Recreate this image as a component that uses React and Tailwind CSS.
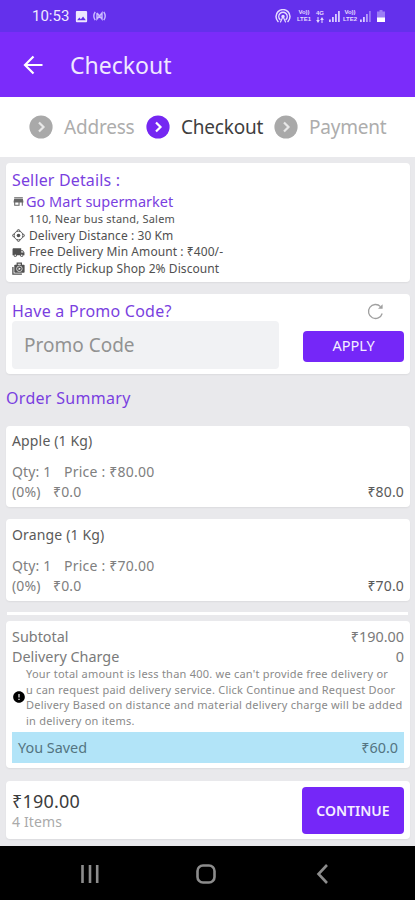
import React from 'react';
import { MdStore, MdLocalShipping, MdError, MdImage } from 'react-icons/md';
import { clsx } from 'clsx';

const steps = [
    { label: 'Address', active: false, width: 'w-[117px]' },
    { label: 'Checkout', active: true, width: 'w-[128px]' },
    { label: 'Payment', active: false, width: 'w-[115px]' },
];

const items = [
    { name: 'Apple (1 Kg)', price: '₹80.00', total: '₹80.0' },
    { name: 'Orange (1 Kg)', price: '₹70.00', total: '₹70.0' },
];

function Signal({ dim }) {
    return (
        <svg width="11" height="12" viewBox="0 0 11 12" fill="#d9ccff" className="shrink-0">
            <rect x="0" y="9.500" width="1.800" height="2.500" />
            <rect x="3" y="7" width="1.800" height="5" />
            <rect x="6" y="4" width="1.800" height="8" opacity={dim ? 0.7 : 1} />
            <rect x="9" y="1" width="1.800" height="11" opacity={dim ? 0.45 : 1} />
        </svg>
    );
}

function Volte({ n }) {
    return (
        <div className="flex w-4 shrink-0 flex-col items-center font-['Liberation_Sans',sans-serif] text-[6px] font-bold leading-[7px] text-[#e4dbff]">
            <span>Vo))</span>
            <span>LTE{n}</span>
        </div>
    );
}

function StatusBar() {
    return (
        <div className="flex h-8 items-center bg-[#6430ec] pl-8 pr-[30px] text-white">
            <span className="w-[38px] font-[Roboto] text-[15px] leading-none text-[#eee8ff]">10:53</span>
            <MdImage size={15} className="ml-1 text-[#eee8ff]" />
            <svg width="13" height="10" viewBox="0 0 13 10" className="ml-1" fill="none" stroke="#cbbcff" strokeWidth="1.400">
                <path d="M2.200 .8c-1.600 2.400-1.600 6 0 8.400M10.800 .8c1.600 2.400 1.600 6 0 8.400M4 2v6l5-6v6L4 2" />
            </svg>
            <div className="ml-auto flex items-center">
                {/* hotspot */}
                <svg width="16" height="14" viewBox="0 0 16 14" fill="none" stroke="#e4dbff" strokeWidth="1.500" strokeLinecap="round">
                    <path d="M3 12.500a7 7 0 1 1 10 0" />
                    <path d="M5 10.500a4.200 4.200 0 1 1 6 0" />
                    <path d="M8 7.500l-2.500 5.500M8 7.500l2.500 5.500" strokeWidth="1.200" />
                    <circle cx="8" cy="7.500" r="1" fill="#e4dbff" />
                </svg>
                <div className="ml-[5px] flex">
                    <Volte n="1" />
                </div>
                <div className="ml-[3px] mr-1 flex w-2.5 flex-col items-center font-['Liberation_Sans',sans-serif] text-[6px] font-bold leading-[7px] text-[#e4dbff]">
                    <span>4G</span>
                    <svg width="8" height="6" viewBox="0 0 8 6" fill="#e4dbff">
                        <path d="M1.500 0h1v3h1.300L2 6 .2 3h1.300zM5.500 6h1V3h1.300L6 0 4.200 3h1.300z" />
                    </svg>
                </div>
                <Signal />
                <div className="ml-0.5 mr-0.5 flex">
                    <Volte n="2" />
                </div>
                <Signal dim />
                <svg width="8" height="12" viewBox="0 0 8 12" className="ml-1.5">
                    <path d="M2.500 0h3v1.500H8V12H0V1.500h2.500z" fill="#9b7df5" />
                    <rect y="7.500" width="8" height="4.500" fill="#fff" />
                </svg>
            </div>
        </div>
    );
}

function Steps() {
    return (
        <div className="flex h-[60px] items-center bg-white pl-[29px]">
            {steps.map((step) => (
                <div key={step.label} className={clsx('flex shrink-0 items-center', step.width)}>
                    <svg width="24" height="24" viewBox="0 0 24 24" className="shrink-0">
                        <circle cx="12" cy="12" r="11.600" fill={step.active ? '#7527f2' : '#a9a9a9'} />
                        <path d="M10 7.500l4.500 4.500-4.500 4.500" fill="none" stroke={step.active ? '#fff' : '#e8e8e8'} strokeWidth="2.200" />
                    </svg>
                    <span className={clsx('ml-[11px] text-[19px] leading-6 tracking-[-0.2px]', step.active ? 'text-[#3f3f3f]' : 'text-[#adadad]')}>
                        {step.label}
                    </span>
                </div>
            ))}
        </div>
    );
}

function SellerRow({ icon, children, className = 'text-[12px] tracking-[0.08px]' }) {
    return (
        <div className="flex h-[16.500px] items-center text-[#505050]">
            <span className="flex w-[17px] shrink-0">{icon}</span>
            <span className={clsx('whitespace-nowrap leading-4', className)}>{children}</span>
        </div>
    );
}

function TargetIcon() {
    return (
        <svg width="13" height="13" viewBox="0 0 13 13" fill="none" stroke="currentColor" strokeWidth="1">
            <path d="M4.600 1.900L6.500 .4l1.900 1.500M11.100 4.600l1.500 1.900-1.500 1.900M8.400 11.100l-1.900 1.500-1.900-1.500M1.900 8.400L.4 6.500l1.500-1.900" />
            <circle cx="6.500" cy="6.500" r="4.400" />
            <circle cx="6.500" cy="6.500" r="1.800" fill="currentColor" stroke="none" />
        </svg>
    );
}

function PickupIcon() {
    return (
        <svg width="13" height="13" viewBox="0 0 13 13">
            <path d="M.9 5v7.200h9" fill="none" stroke="currentColor" strokeWidth="1.300" />
            <path d="M5.200 3V1.200h4.200V3" fill="none" stroke="currentColor" strokeWidth="1.200" />
            <rect x="2.300" y="2.800" width="10.300" height="8" rx="0.800" fill="currentColor" />
            <circle cx="7.400" cy="6.800" r="2.800" fill="none" stroke="#fff" strokeWidth="0.700" />
            <path d="M6.600 5.400v2.800l2.200-1.400z" fill="#fff" />
        </svg>
    );
}

function Card({ className, children }) {
    return <div className={clsx('mx-[6px] mr-[5px] rounded-[4px] bg-white shadow-[0_1px_2px_rgba(0,0,0,0.06)]', className)}>{children}</div>;
}

export default function App() {
    return (
        <div className="flex h-[900px] w-[415px] flex-col overflow-hidden bg-[#e9e9ec] font-['Noto_Sans',sans-serif]">
            <StatusBar />
            <div className="flex h-[65px] items-center bg-[#7b2cfa] pl-[23px] text-white">
                <svg width="20" height="20" viewBox="0 0 20 20" fill="none" stroke="#fff" strokeWidth="2.200">
                    <path d="M19.500 10H2.500M10.500 1.500L2 10l8.500 8.500" />
                </svg>
                <h1 className="ml-[27px] text-[23px] leading-8 text-[#f0e8ff]">Checkout</h1>
            </div>
            <Steps />

            <Card className="mt-1.5 h-[119px] pl-[6px] pt-[7px]">
                <h2 className="text-[16px] leading-[21px] tracking-[0.15px] text-[#7a3fe0]">Seller Details :</h2>
                <div className="flex h-5 items-center">
                    <MdStore size={13} className="text-[#666]" />
                    <span className="ml-px text-[14.500px] leading-5 text-[#7a3fe0]">Go Mart supermarket</span>
                </div>
                <SellerRow className="text-[11px] tracking-[0.2px]">110, Near bus stand, Salem</SellerRow>
                <SellerRow icon={<TargetIcon />}>Delivery Distance : 30 Km</SellerRow>
                <SellerRow icon={<MdLocalShipping size={13} />}>Free Delivery Min Amount : ₹400/-</SellerRow>
                <SellerRow icon={<PickupIcon />}>Directly Pickup Shop 2% Discount</SellerRow>
            </Card>

            <Card className="mt-3 h-20 pl-[6px] pr-[6px] pt-[7px]">
                <div className="flex h-5 items-center justify-between pr-5">
                    <h2 className="text-[16px] leading-5 tracking-[0.24px] text-[#7a3fe0]">Have a Promo Code?</h2>
                    <svg width="17" height="17" viewBox="0 0 17 17" fill="none" stroke="#a0a0a0" strokeWidth="1.300">
                        <path d="M15.200 10.500A7 7 0 1 1 13.500 3.600" />
                        <path d="M15.600 1.200v4.600H11z" fill="#a0a0a0" stroke="none" />
                    </svg>
                </div>
                <div className="flex items-center justify-between">
                    <div className="flex h-12 w-[267px] items-center rounded-[4px] bg-[#f1f2f4] pl-3 text-[19px] text-[#929292]">
                        Promo Code
                    </div>
                    <button className="mt-0.5 h-[31px] w-[101px] rounded-[4px] bg-[#7527f8] text-[14.500px] text-[#f4eeff]">APPLY</button>
                </div>
            </Card>

            <h2 className="mt-3 pl-1.5 text-[16px] leading-6 tracking-[0.3px] text-[#7a3fe0]">Order Summary</h2>

            {items.map((item, idx) => (
                <Card key={item.name} className={clsx('pl-[6px] pr-[6px] text-[14px] leading-5 tracking-[0.15px] text-[#808080]', idx === 0 ? 'mt-4 h-[81px] pt-[5px]' : 'mt-3 h-[82px] pt-[6px]')}>
                    <div className="text-[#5a5a5a]">{item.name}</div>
                    <div className="mt-[11px] flex">
                        <span className="w-[52px]">Qty: 1</span>
                        <span className="tracking-[0.22px]">Price : {item.price}</span>
                    </div>
                    <div className="flex">
                        <span className="w-[41px]">(0%)</span>
                        <span>₹0.0</span>
                        <span className="ml-auto text-[#5a5a5a]">{item.total}</span>
                    </div>
                </Card>
            ))}

            {/* top edge of the next item, cut off by the totals */}
            <div className="ml-[7px] mr-[7px] mt-[11px] h-[3px] bg-white" />

            <Card className="mt-1.5 h-[147px] px-[6px] pt-[6px] text-[#7a7a7a]">
                <div className="flex h-5 justify-between text-[14.400px] leading-5">
                    <span>Subtotal</span>
                    <span>₹190.00</span>
                </div>
                <div className="flex h-5 justify-between text-[14.400px] leading-5">
                    <span>Delivery Charge</span>
                    <span>0</span>
                </div>
                <div className="-mt-px flex h-[66px] items-start">
                    <MdError size={14} className="mt-6 shrink-0 text-black" />
                    <p className="whitespace-nowrap text-[11px] leading-[15.700px] tracking-[0.23px] text-[#8a8a8a]">
                        Your total amount is less than 400. we can't provide free delivery or<br />
                        u can request paid delivery service. Click Continue and Request Door<br />
                        Delivery Based on distance and material delivery charge will be added<br />
                        in delivery on items.
                    </p>
                </div>
                <div className="flex h-[31px] items-center justify-between bg-[#b2e4f8] px-[6px] text-[14.400px] text-[#547481]">
                    <span>You Saved</span>
                    <span>₹60.0</span>
                </div>
            </Card>

            <Card className="mt-[13px] flex h-[58px] items-center justify-between pl-[6px] pr-[6px]">
                <div>
                    <div className="text-[18px] leading-6 tracking-[0.2px] text-[#3c3c3c]">₹190.00</div>
                    <div className="-mt-px text-[14px] leading-5 tracking-[0.15px] text-[#aaa]">4 Items</div>
                </div>
                <button className="h-[47px] w-[102px] rounded-[4px] bg-[#7527f8] text-[14px] font-semibold text-[#f4eeff]">CONTINUE</button>
            </Card>

            <div className="mt-auto flex h-[54px] items-center bg-black">
                <svg width="415" height="54" viewBox="0 0 415 54" fill="none" stroke="#8c8c8c" strokeWidth="2.600">
                    <path d="M82.500 19v18M90 19v18M97.200 19v18" />
                    <rect x="197.500" y="19.500" width="17" height="17" rx="5.500" />
                    <path d="M327 19l-8.500 9 8.500 9" />
                </svg>
            </div>
        </div>
    );
}
